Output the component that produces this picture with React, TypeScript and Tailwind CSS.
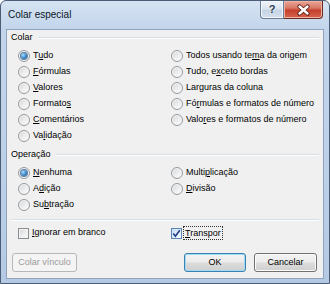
import React from "react";

type Opt = { label: string; k: number; checked?: boolean };

const leftColar: Opt[] = [
  { label: "Tudo", k: 1, checked: true },
  { label: "Fórmulas", k: 0 },
  { label: "Valores", k: 0 },
  { label: "Formatos", k: 7 },
  { label: "Comentários", k: 0 },
  { label: "Validação", k: 2 },
];

const rightColar: Opt[] = [
  { label: "Todos usando tema da origem", k: 15 },
  { label: "Tudo, exceto bordas", k: 7 },
  { label: "Larguras da coluna", k: -1 },
  { label: "Fórmulas e formatos de número", k: 2 },
  { label: "Valores e formatos de número", k: 4 },
];

const leftOp: Opt[] = [
  { label: "Nenhuma", k: 0, checked: true },
  { label: "Adição", k: 1 },
  { label: "Subtração", k: 2 },
];

const rightOp: Opt[] = [
  { label: "Multiplicação", k: 5 },
  { label: "Divisão", k: 0 },
];

// underline the access key letter
function Acc({ text, k }: { text: string; k: number }) {
  if (k < 0) return <>{text}</>;
  return (
    <>
      {text.slice(0, k)}
      <span className="underline underline-offset-[1px]">{text[k]}</span>
      {text.slice(k + 1)}
    </>
  );
}

function Radio({ checked }: { checked?: boolean }) {
  return (
    <span className="flex h-[12px] w-[12px] shrink-0 items-center justify-center rounded-full border border-[#979a9d] bg-[linear-gradient(135deg,#d3d5d7_0%,#eceef0_55%,#fdfdfd_100%)] shadow-[inset_0_0_0_1px_#f6f6f6]">
      {checked && (
        <span className="h-[6px] w-[6px] rounded-full bg-[radial-gradient(circle_at_35%_35%,#a9dcfb_0%,#3a86c8_55%,#14467e_100%)] shadow-[0_0_0_1px_#5a7fa5]" />
      )}
    </span>
  );
}

function RadioRow({ opt }: { opt: Opt }) {
  return (
    <div className="flex h-[16px] items-center gap-[3px]">
      <Radio checked={opt.checked} />
      <span>
        <Acc text={opt.label} k={opt.k} />
      </span>
    </div>
  );
}

function GroupHeader({ title }: { title: string }) {
  return (
    <div className="flex h-[16px] items-center pl-[4px] pr-[4px]">
      <span>{title}</span>
      <span className="ml-[5px] h-[2px] flex-1 border-t border-b border-t-[#d5dfe5] border-b-white" />
    </div>
  );
}

function CheckBox({ checked }: { checked?: boolean }) {
  return (
    <span
      className={
        checked
          ? "flex h-[11px] w-[11px] shrink-0 items-center justify-center border border-[#5b86b3] bg-[linear-gradient(135deg,#c5dff5_0%,#e3f0fb_60%,#f4f9fe_100%)]"
          : "flex h-[11px] w-[11px] shrink-0 items-center justify-center border border-[#8b8e91] bg-[linear-gradient(135deg,#d4d6d8_0%,#eceeef_55%,#fbfbfb_100%)] shadow-[inset_0_0_0_1px_#f3f3f3]"
      }
    >
      {checked && (
        <svg width="9" height="9" viewBox="0 0 9 9">
          <path d="M1.3 4.6 L3.4 7.2 L7.8 1.2" fill="none" stroke="#1f3a8a" strokeWidth="1.6" />
        </svg>
      )}
    </span>
  );
}

const btn =
  "flex h-[19px] items-center justify-center rounded-[3px] border bg-[linear-gradient(180deg,#f3f3f3_0%,#ebebeb_48%,#dcdcdc_52%,#cfcfcf_100%)]";

export default function App() {
  return (
    <div className="flex h-[284px] w-[330px] flex-col overflow-hidden rounded-t-[6px] border border-[#4a5d74] bg-[linear-gradient(180deg,#d6e3f2_0%,#c2d5eb_10%,#bcd0e8_60%,#b4c9e3_100%)] font-['Liberation_Sans',Arial,sans-serif] text-[9px] text-black">
      {/* title bar */}
      <div className="flex h-[28px] shrink-0 items-start">
        <span className="mt-[6px] pl-[7px] text-[10px] text-[#0b1726]">Colar especial</span>
        <div className="ml-auto mr-[6px] flex">
          <div className="flex h-[18px] w-[24px] items-center justify-center rounded-bl-[4px] border border-t-0 border-[#6a7e98] bg-[linear-gradient(180deg,#eef3f9_0%,#dce6f1_45%,#c6d4e5_55%,#d5e1ee_100%)] shadow-[inset_0_0_0_1px_#f4f8fc]">
            <span className="text-[11px] font-bold leading-none text-[#2b3c52] [text-shadow:0_0_2px_#fff]">?</span>
          </div>
          <div className="flex h-[18px] w-[39px] items-center justify-center rounded-br-[4px] border border-l-0 border-t-0 border-[#6b2a22] bg-[linear-gradient(180deg,#eaa596_0%,#d97a68_40%,#c7402b_55%,#d5664f_100%)] shadow-[inset_0_0_0_1px_#eeb3a7]">
            <svg width="15" height="12" viewBox="0 0 15 12">
              <path d="M3.5 2.5 L11.5 9.5 M11.5 2.5 L3.5 9.5" stroke="#5a1f17" strokeWidth="4.2" strokeLinecap="round" />
              <path d="M3.5 2.5 L11.5 9.5 M11.5 2.5 L3.5 9.5" stroke="#ffffff" strokeWidth="2.4" strokeLinecap="round" />
            </svg>
          </div>
        </div>
      </div>

      {/* client area */}
      <div className="mx-[5px] flex h-[250px] shrink-0 flex-col border border-[#8fa3bc] bg-[#f0f0f0]">
        <GroupHeader title="Colar" />
        <div className="mt-[2px] grid grid-cols-[153px_1fr] pl-[11px]">
          <div className="flex flex-col">
            {leftColar.map((o) => (
              <RadioRow key={o.label} opt={o} />
            ))}
          </div>
          <div className="flex flex-col">
            {rightColar.map((o) => (
              <RadioRow key={o.label} opt={o} />
            ))}
          </div>
        </div>

        <div className="mt-[3px]">
          <GroupHeader title="Operação" />
        </div>
        <div className="mt-[2px] grid grid-cols-[153px_1fr] pl-[11px]">
          <div className="flex flex-col">
            {leftOp.map((o) => (
              <RadioRow key={o.label} opt={o} />
            ))}
          </div>
          <div className="flex flex-col">
            {rightOp.map((o) => (
              <RadioRow key={o.label} opt={o} />
            ))}
          </div>
        </div>

        <div className="mx-[4px] mt-[6px] h-[2px] border-t border-b border-t-[#d5dfe5] border-b-white" />

        <div className="mt-[4px] grid h-[16px] grid-cols-[153px_1fr] pl-[11px]">
          <div className="flex items-center gap-[3px]">
            <CheckBox />
            <span>
              <Acc text="Ignorar em branco" k={0} />
            </span>
          </div>
          <div className="flex items-center gap-[2px]">
            <CheckBox checked />
            <span className="px-[1px] leading-[12px] outline outline-1 outline-dotted outline-[#333]">
              <Acc text="Transpor" k={0} />
            </span>
          </div>
        </div>

        <div className="mt-[12px] flex items-center pl-[5px] pr-[6px]">
          <div className="flex h-[19px] w-[65px] items-center justify-center rounded-[3px] border border-[#b4b9bd] bg-[#f4f4f4] text-[#9a9a9a]">
            Colar vínculo
          </div>
          <div className={btn + " ml-auto w-[62px] border-[#3c7fb1] shadow-[inset_0_0_0_1px_#9edcf5]"}>OK</div>
          <div className={btn + " ml-[8px] w-[63px] border-[#707070] shadow-[inset_0_0_0_1px_#fbfbfb]"}>Cancelar</div>
        </div>
      </div>
    </div>
  );
}
